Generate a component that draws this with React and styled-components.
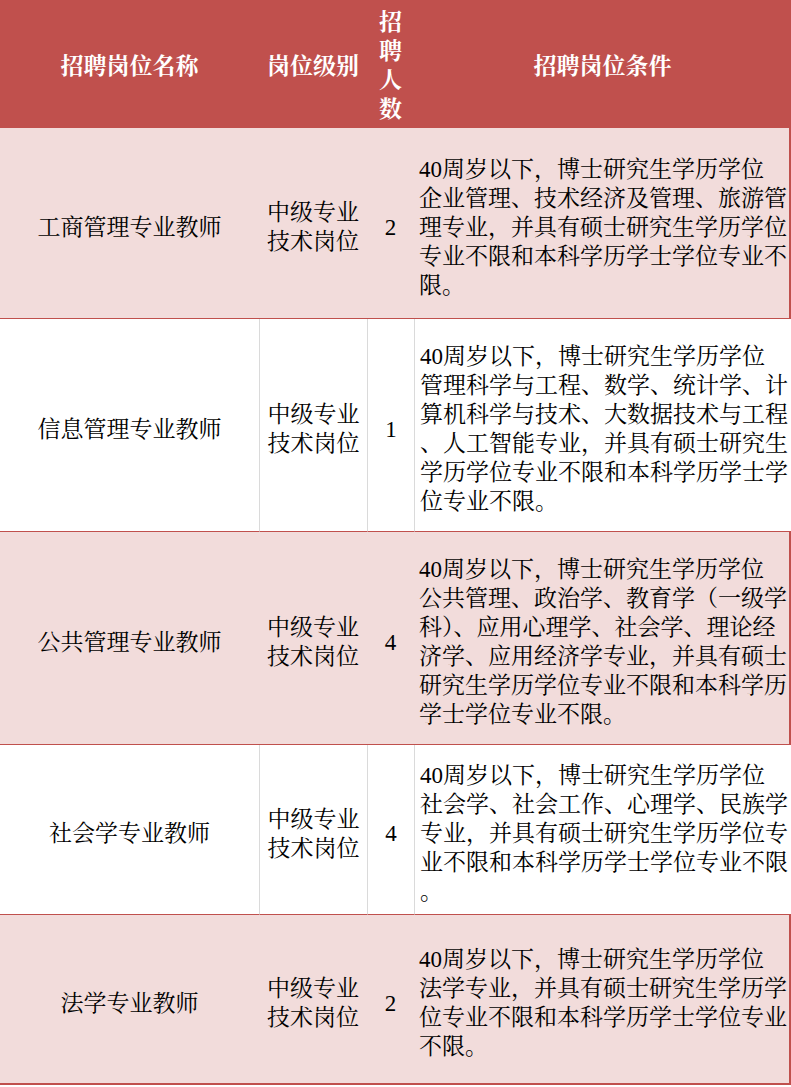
import React from 'react';
import styled, { createGlobalStyle } from 'styled-components';

const GlobalStyle = createGlobalStyle`
  html, body {
    margin: 0;
    padding: 0;
    background: #ffffff;
  }
`;

const RED = '#c0504d';
const PINK = '#f2dcdb';
const GRID = '#dadada';

const Table = styled.table`
  width: 791px;
  table-layout: fixed;
  border-collapse: separate;
  border-spacing: 0;
  font-family: "Liberation Serif", "Noto Serif CJK SC", "Noto Sans CJK SC", serif;
  font-size: 23px;
  line-height: 29px;
  color: #000;
`;

const HeadCell = styled.th`
  box-sizing: border-box;
  height: 128px;
  padding: 4px 0 0;
  background: ${RED};
  color: #fff;
  font-weight: bold;
  text-align: center;
  vertical-align: middle;
`;

const Stacked = styled.span`
  display: inline-block;
  width: 1em;
  white-space: normal;
  word-break: break-all;
`;

const Cell = styled.td`
  box-sizing: border-box;
  height: ${(p) => p.$height}px;
  padding: 8px 0 0;
  background: ${(p) => (p.$shaded ? PINK : '#fff')};
  border-bottom: ${(p) => (p.$last ? 2 : 1)}px solid ${RED};
  border-left: ${(p) => (!p.$shaded && !p.$first ? `1px solid ${GRID}` : 'none')};
  border-right: ${(p) => (p.$shaded && p.$end ? `2px solid ${RED}` : 'none')};
  text-align: ${(p) => (p.$left ? 'left' : 'center')};
  vertical-align: middle;
`;

const Lines = styled.div`
  padding-left: 5px;
  white-space: nowrap;
`;

const Line = styled.div``;

const rows = [
  {
    name: '工商管理专业教师',
    count: '2',
    height: 191,
    lines: [
      '40周岁以下，博士研究生学历学位',
      '企业管理、技术经济及管理、旅游管',
      '理专业，并具有硕士研究生学历学位',
      '专业不限和本科学历学士学位专业不',
      '限。',
    ],
  },
  {
    name: '信息管理专业教师',
    count: '1',
    height: 213,
    lines: [
      '40周岁以下，博士研究生学历学位',
      '管理科学与工程、数学、统计学、计',
      '算机科学与技术、大数据技术与工程',
      '、人工智能专业，并具有硕士研究生',
      '学历学位专业不限和本科学历学士学',
      '位专业不限。',
    ],
  },
  {
    name: '公共管理专业教师',
    count: '4',
    height: 213,
    lines: [
      '40周岁以下，博士研究生学历学位',
      '公共管理、政治学、教育学（一级学',
      '科）、应用心理学、社会学、理论经',
      '济学、应用经济学专业，并具有硕士',
      '研究生学历学位专业不限和本科学历',
      '学士学位专业不限。',
    ],
  },
  {
    name: '社会学专业教师',
    count: '4',
    height: 170,
    lines: [
      '40周岁以下，博士研究生学历学位',
      '社会学、社会工作、心理学、民族学',
      '专业，并具有硕士研究生学历学位专',
      '业不限和本科学历学士学位专业不限',
      '。',
    ],
  },
  {
    name: '法学专业教师',
    count: '2',
    height: 170,
    lines: [
      '40周岁以下，博士研究生学历学位',
      '法学专业，并具有硕士研究生学历学',
      '位专业不限和本科学历学士学位专业',
      '不限。',
    ],
  },
];

export default function App() {
  return (
    <>
      <GlobalStyle />
      <Table>
        <colgroup>
          <col style={{ width: 259 }} />
          <col style={{ width: 108 }} />
          <col style={{ width: 47 }} />
          <col style={{ width: 377 }} />
        </colgroup>
        <thead>
          <tr>
            <HeadCell>招聘岗位名称</HeadCell>
            <HeadCell>岗位级别</HeadCell>
            <HeadCell>
              <Stacked>招聘人数</Stacked>
            </HeadCell>
            <HeadCell>招聘岗位条件</HeadCell>
          </tr>
        </thead>
        <tbody>
          {rows.map((r, i) => {
            const shaded = i % 2 === 0;
            const last = i === rows.length - 1;
            const common = { $shaded: shaded, $last: last, $height: r.height };
            return (
              <tr key={r.name}>
                <Cell {...common} $first>
                  {r.name}
                </Cell>
                <Cell {...common}>
                  <Line>中级专业</Line>
                  <Line>技术岗位</Line>
                </Cell>
                <Cell {...common}>{r.count}</Cell>
                <Cell {...common} $left $end>
                  <Lines>
                    {r.lines.map((l, j) => (
                      <Line key={j}>{l}</Line>
                    ))}
                  </Lines>
                </Cell>
              </tr>
            );
          })}
        </tbody>
      </Table>
    </>
  );
}
